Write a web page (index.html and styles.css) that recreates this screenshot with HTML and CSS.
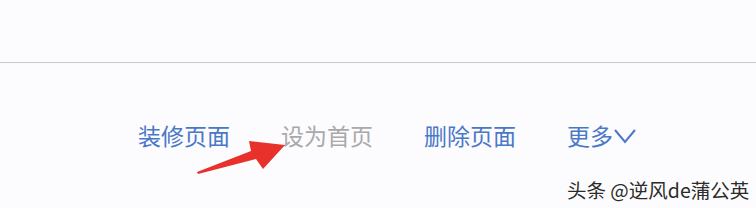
FILE: index.html
```html
<!DOCTYPE html>
<html lang="zh">
<head>
<meta charset="utf-8">
<link rel="stylesheet" href="styles.css">
</head>
<body>
<div class="page">
  <div class="top"></div>
  <div class="actions">
    <span class="act blue">装修页面</span>
    <span class="act grey">设为首页</span>
    <span class="act blue">删除页面</span>
    <span class="act blue more">更多<svg class="chev" width="24" height="16" viewBox="0 0 24 16"><path d="M2 2 L12 14 L22 2" fill="none" stroke="#4a78c8" stroke-width="2"/></svg></span>
  </div>
  <svg class="arrow" width="110" height="60" viewBox="0 0 110 60">
    <path d="M8 48 L62 27 L60 17 L96 21 L74 45 L67 35 L9 50 Z" fill="#e8312b"/>
  </svg>
  <div class="mark">头条 @逆风de蒲公英</div>
</div>
</body>
</html>
```

FILE: styles.css
```css
html, body {
  margin: 0;
  padding: 0;
}
body {
  width: 756px;
  height: 208px;
  background: #fcfbfd;
  font-family: "Noto Sans CJK SC", "Noto Sans", sans-serif;
  overflow: hidden;
}
.page {
  position: relative;
  width: 756px;
  height: 208px;
}
.top {
  height: 62px;
  border-bottom: 1px solid #c9c8ce;
}
.actions {
  display: flex;
  align-items: center;
  gap: 51px;
  padding-left: 138px;
  padding-top: 56px;
}
.act {
  font-size: 23px;
  line-height: 32px;
  display: flex;
  align-items: center;
}
.blue { color: #4a78c8; }
.grey { color: #a9a9ab; }
.chev {
  margin-top: 2px;
}
.arrow {
  position: absolute;
  left: 189px;
  top: 124px;
}
.mark {
  position: absolute;
  left: 567px;
  top: 175px;
  font-size: 19.5px;
  color: #2b2b2b;
  text-shadow: 0 0 2px #fff, 0 0 2px #fff;
  white-space: nowrap;
}
```
